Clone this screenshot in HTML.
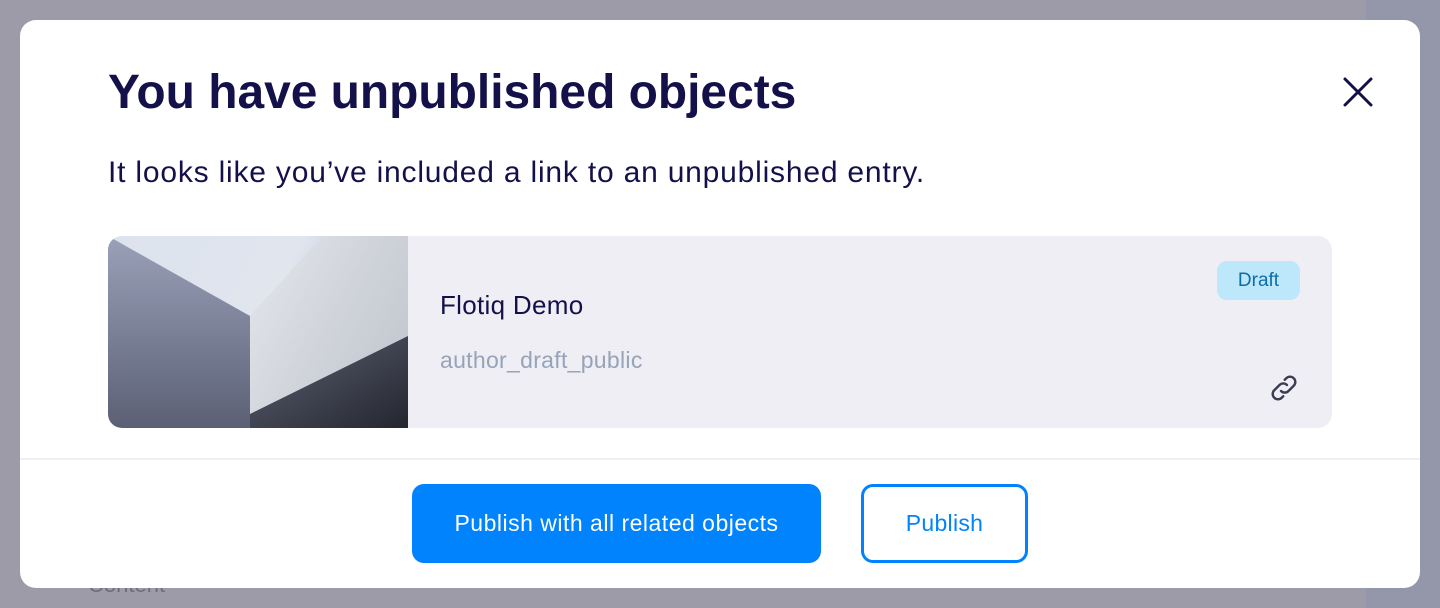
<!DOCTYPE html>
<html><head><style>
body{margin:0;width:1440px;height:608px;background:#9c9ba7;font-family:"Liberation Sans",sans-serif;position:relative;overflow:hidden}
.strip{position:absolute;left:1366px;top:0;width:74px;height:608px;background:#9397a9}
.bgtxt{position:absolute;left:88px;top:572px;font-size:22px;color:#6c6f80}
.modal{position:absolute;left:20px;top:20px;width:1400px;height:568px;background:#fff;border-radius:16px}
h1{position:absolute;left:88px;top:45px;margin:0;font-size:47.9px;font-weight:bold;color:#14114a;white-space:nowrap}
.sub{position:absolute;left:88px;top:136px;font-size:30px;letter-spacing:0.8px;color:#14114a;white-space:nowrap}
.close{position:absolute;left:1322px;top:56px}
.card{position:absolute;left:88px;top:216px;width:1224px;height:192px;background:#eeeef4;border-radius:14px;overflow:hidden}
.img{position:absolute;left:0;top:0;width:300px;height:192px}
.name{position:absolute;left:332px;top:54px;font-size:26px;letter-spacing:0.3px;color:#14114a;white-space:nowrap}
.slug{position:absolute;left:332px;top:111px;font-size:23px;letter-spacing:0.3px;color:#96a3b8;white-space:nowrap}
.draft{position:absolute;left:1109px;top:25px;width:83px;height:39px;background:#bde7fb;border-radius:10px;color:#0d6ea6;font-size:19px;text-align:center;line-height:39px}
.link{position:absolute;left:1158px;top:134px}
.div{position:absolute;left:0;top:438px;width:1400px;height:2px;background:#eeeef3}
.b1{position:absolute;left:392px;top:464px;width:409px;height:79px;background:#0083fc;border-radius:12px;color:#fff;font-size:23px;letter-spacing:0.5px;text-align:center;line-height:79px;white-space:nowrap}
.b2{position:absolute;left:841px;top:464px;width:161px;height:73px;border:3px solid #0083fc;border-radius:12px;color:#0083fc;font-size:23px;letter-spacing:0.3px;text-align:center;line-height:73px}
</style></head><body>
<div class="strip"></div>
<div class="bgtxt">Content</div>
<div class="modal">
<h1>You have unpublished objects</h1>
<div class="sub">It looks like you’ve included a link to an unpublished entry.</div>
<svg class="close" width="32" height="32" viewBox="0 0 32 32"><path d="M3 3L29 29M29 3L3 29" stroke="#14114a" stroke-width="3" stroke-linecap="round"/></svg>
<div class="card">
<svg class="img" viewBox="0 0 300 192">
<defs>
<linearGradient id="a" x1="0" y1="0" x2="0" y2="1"><stop offset="0" stop-color="#9aa1b8"/><stop offset="1" stop-color="#5b6075"/></linearGradient>
<linearGradient id="b" x1="0" y1="0" x2="1" y2="0.3"><stop offset="0" stop-color="#dde3ee"/><stop offset="0.6" stop-color="#e0e5ee"/><stop offset="1" stop-color="#a9aec2"/></linearGradient>
<linearGradient id="c" x1="0" y1="0" x2="1" y2="0.6"><stop offset="0" stop-color="#e4e7ec"/><stop offset="0.6" stop-color="#d0d4da"/><stop offset="1" stop-color="#c4c8d0"/></linearGradient>
<linearGradient id="d" x1="0" y1="0" x2="1" y2="1"><stop offset="0" stop-color="#5d6173"/><stop offset="1" stop-color="#24262f"/></linearGradient>
</defs>
<rect width="300" height="192" fill="url(#b)"/>
<polygon points="0,0 142,80 142,192 0,192" fill="url(#a)"/>
<polygon points="142,80 215,0 300,0 300,100 142,178" fill="url(#c)"/>
<polygon points="142,178 300,100 300,192 142,192" fill="url(#d)"/>
</svg>
<div class="name">Flotiq Demo</div>
<div class="slug">author_draft_public</div>
<div class="draft">Draft</div>
<svg class="link" width="36" height="36" viewBox="0 0 24 24" fill="none" stroke="#3c3c55" stroke-width="1.6" stroke-linecap="round"><path d="M10 14a3.5 3.5 0 0 0 5 0l3.5-3.5a3.5 3.5 0 0 0-5-5L12.5 6.5"/><path d="M14 10a3.5 3.5 0 0 0-5 0L5.5 13.5a3.5 3.5 0 0 0 5 5l1-1"/></svg>
</div>
<div class="div"></div>
<div class="b1">Publish with all related objects</div>
<div class="b2">Publish</div>
</div>
</body></html>
